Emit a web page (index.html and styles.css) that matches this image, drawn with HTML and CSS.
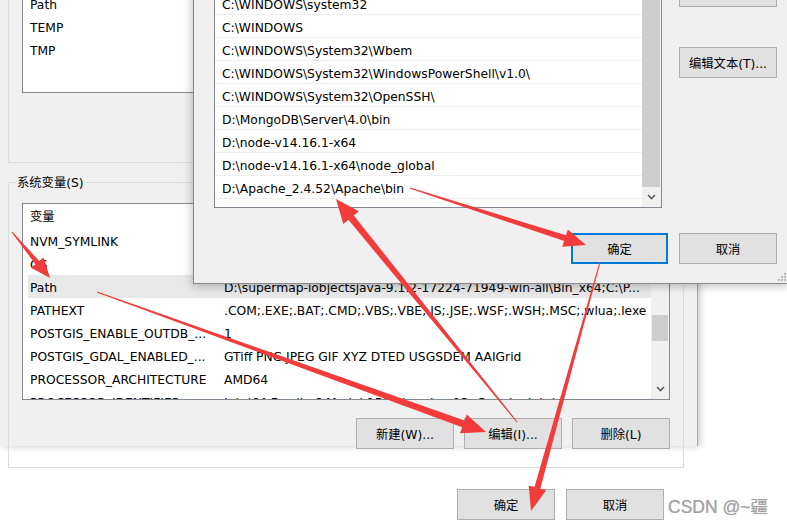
FILE: index.html
```html
<!DOCTYPE html>
<html lang="zh-CN">
<head>
<meta charset="utf-8">
<title>环境变量</title>
<link rel="stylesheet" href="styles.css">
</head>
<body>
<div class="screen">
  <div class="back">
    <div class="group user-group">
      <div class="listbox user-list">
        <div class="rows">
          <div class="lrow"><span class="c1">变量</span><span class="c2">值</span></div>
          <div class="lrow"><span class="c1">OneDrive</span><span class="c2">C:\Users\Administrator\OneDrive</span></div>
          <div class="lrow"><span class="c1">Path</span><span class="c2">C:\Users\Administrator\AppData\Local\Microsoft\WindowsApps;</span></div>
          <div class="lrow"><span class="c1">TEMP</span><span class="c2">C:\Users\Administrator\AppData\Local\Temp</span></div>
          <div class="lrow"><span class="c1">TMP</span><span class="c2">C:\Users\Administrator\AppData\Local\Temp</span></div>
        </div>
      </div>
      <div class="btnrow">
        <button class="btn">新建(N)...</button>
        <button class="btn">编辑(E)...</button>
        <button class="btn">删除(D)</button>
      </div>
    </div>

    <div class="group sys-group">
      <div class="group-title">系统变量(S)</div>
      <div class="listbox sys-list">
        <div class="rows">
          <div class="lrow head"><span class="c1">变量</span><span class="c2">值</span></div>
          <div class="lrow"><span class="c1">NVM_SYMLINK</span><span class="c2">D:\nodejs</span></div>
          <div class="lrow"><span class="c1">OS</span><span class="c2">Windows_NT</span></div>
          <div class="lrow sel"><span class="c1">Path</span><span class="c2">D:\supermap-iobjectsjava-9.1.2-17224-71949-win-all\Bin_x64;C:\P...</span></div>
          <div class="lrow"><span class="c1">PATHEXT</span><span class="c2">.COM;.EXE;.BAT;.CMD;.VBS;.VBE;.JS;.JSE;.WSF;.WSH;.MSC;.wlua;.lexe</span></div>
          <div class="lrow"><span class="c1">POSTGIS_ENABLE_OUTDB_...</span><span class="c2">1</span></div>
          <div class="lrow"><span class="c1">POSTGIS_GDAL_ENABLED_...</span><span class="c2">GTiff PNG JPEG GIF XYZ DTED USGSDEM AAIGrid</span></div>
          <div class="lrow"><span class="c1">PROCESSOR_ARCHITECTURE</span><span class="c2">AMD64</span></div>
          <div class="lrow"><span class="c1">PROCESSOR_IDENTIFIER</span><span class="c2">Intel64 Family 6 Model 158 Stepping 13, GenuineIntel</span></div>
        </div>
        <div class="vscroll back-scroll">
          <div class="thumb"></div>
          <div class="fill"></div>
          <div class="sarrow"><svg width="9" height="6" viewBox="0 0 9 6"><path d="M1 1 L4.5 4.5 L8 1" fill="none" stroke="#606060" stroke-width="1.6"/></svg></div>
        </div>
      </div>
      <div class="btnrow">
        <button class="btn">新建(W)...</button>
        <button class="btn">编辑(I)...</button>
        <button class="btn">删除(L)</button>
      </div>
    </div>

    <div class="footer">
      <button class="btn">确定</button>
      <button class="btn">取消</button>
    </div>
  </div>

  <div class="front">
    <div class="front-main">
      <div class="listbox front-list">
        <div class="frows">
          <div class="frow">C:\Program Files (x86)\Common Files\Oracle\Java\javapath</div>
          <div class="frow">%NVM_SYMLINK%</div>
          <div class="frow">C:\WINDOWS\system32</div>
          <div class="frow">C:\WINDOWS</div>
          <div class="frow">C:\WINDOWS\System32\Wbem</div>
          <div class="frow">C:\WINDOWS\System32\WindowsPowerShell\v1.0\</div>
          <div class="frow">C:\WINDOWS\System32\OpenSSH\</div>
          <div class="frow">D:\MongoDB\Server\4.0\bin</div>
          <div class="frow">D:\node-v14.16.1-x64</div>
          <div class="frow">D:\node-v14.16.1-x64\node_global</div>
          <div class="frow">D:\Apache_2.4.52\Apache\bin</div>
        </div>
        <div class="vscroll front-scroll">
          <div class="thumb"></div>
          <div class="sarrow"><svg width="9" height="6" viewBox="0 0 9 6"><path d="M1 1 L4.5 4.5 L8 1" fill="none" stroke="#606060" stroke-width="1.6"/></svg></div>
        </div>
      </div>
      <div class="side">
        <button class="btn side-first">下移(O)</button>
        <button class="btn side-text">编辑文本(T)...</button>
      </div>
    </div>
    <div class="front-footer">
      <button class="btn btn-default">确定</button>
      <button class="btn">取消</button>
    </div>
    <svg class="grip" width="8" height="8" viewBox="0 0 8 8">
      <rect x="6" y="0" width="2" height="2" fill="#b8b8b8"/>
      <rect x="3" y="3" width="2" height="2" fill="#b8b8b8"/>
      <rect x="6" y="3" width="2" height="2" fill="#b8b8b8"/>
      <rect x="0" y="6" width="2" height="2" fill="#b8b8b8"/>
      <rect x="3" y="6" width="2" height="2" fill="#b8b8b8"/>
      <rect x="6" y="6" width="2" height="2" fill="#b8b8b8"/>
    </svg>
  </div>

  <svg class="arrows" width="787" height="526" viewBox="0 0 787 526">
    <polygon points="11.6,232.3 35.4,264.2 31.1,267.7 50,278 43.5,257.5 39.2,261.0 12.4,231.7"/>
    <polygon points="96.8,292.5 462.2,427.2 460.0,433.3 486,432 466.8,414.5 464.6,420.6 97.2,291.5"/>
    <polygon points="517.4,421.7 353.8,215.4 358.9,211.3 336,199 343.3,223.9 348.4,219.8 516.6,422.3"/>
    <polygon points="409.8,188.5 564.2,241.1 562.3,246.8 586,245 567.9,229.6 566.0,235.3 410.2,187.5"/>
    <polygon points="599.5,261.9 534.5,487.1 528.7,485.5 531,511 546.1,490.3 540.3,488.7 600.5,262.1"/>
  </svg>

  <div class="watermark">CSDN @~疆</div>
</div>
</body>
</html>
```

FILE: styles.css
```css
* {
  box-sizing: border-box;
}

html,
body {
  margin: 0;
  padding: 0;
}

body {
  background: #ffffff;
  color: #000000;
  font-family: "DejaVu Sans", "Noto Sans CJK SC", sans-serif;
  font-size: 12.3px;
}

.screen {
  position: relative;
  width: 787px;
  height: 526px;
  overflow: hidden;
  background: #ffffff;
}

/* ---------- back dialog ---------- */
.back {
  width: 698px;
  height: 526px;
  background: #f0f0f0;
  border-right: 1px solid #a9a9a9;
  box-shadow: 2px 0 7px rgba(0, 0, 0, 0.22);
  padding-left: 8px;
}

.group {
  width: 676px;
  border: 1px solid #dcdcdc;
}

.user-group {
  margin-top: -80px;
  height: 243px;
  padding-top: 24px;
}

.sys-group {
  margin-top: 19px;
  height: 286px;
}

.group-title {
  width: max-content;
  margin: -10px 0 0 7px;
  padding: 2px 1px 0 1px;
  line-height: 17px;
  background: #f0f0f0;
}

.listbox {
  display: flex;
  margin-left: 13px;
  width: 648px;
  border: 1px solid #828790;
  background: #ffffff;
  overflow: hidden;
}

.user-list {
  height: 148px;
}

.sys-list {
  margin-top: 11px;
  height: 197px;
}

.rows {
  flex: 1;
  min-width: 0;
}

.lrow {
  display: flex;
  height: 23px;
  padding-top: 2px;
  line-height: 23px;
  margin-left: 5px;
  white-space: nowrap;
  overflow: hidden;
}

.lrow.head {
  height: 25px;
}

.lrow.sel {
  background: #e8e8e8;
}

.c1 {
  flex: none;
  width: 196px;
  padding-left: 2px;
  overflow: hidden;
}

.c2 {
  flex: 1;
  overflow: hidden;
}

.vscroll {
  flex: none;
  display: flex;
  flex-direction: column;
  background: #f0f0f0;
}

.back-scroll {
  width: 18px;
}

.back-scroll .thumb {
  margin: 111px 1px 0 1px;
  height: 26px;
  background: #cdcdcd;
}

.fill {
  flex: 1;
}

.sarrow {
  height: 20px;
  display: flex;
  align-items: center;
  justify-content: center;
}

.btnrow {
  display: flex;
  justify-content: flex-end;
  gap: 10px;
  margin-top: 18px;
  padding-right: 13px;
}

.btn {
  flex: none;
  width: 98px;
  height: 31px;
  padding: 0;
  margin: 0;
  background: #e1e1e1;
  border: 1px solid #adadad;
  color: #000000;
  font: inherit;
  display: flex;
  align-items: center;
  justify-content: center;
}

.footer {
  display: flex;
  justify-content: flex-end;
  gap: 11px;
  width: 676px;
  margin-top: 21px;
  padding-right: 20px;
}

/* ---------- front dialog (window over the desktop) ---------- */
.front {
  position: absolute;
  left: 193px;
  top: -70px;
  width: 596px;
  background: #f0f0f0;
  border: 1px solid #8a8a8a;
  box-shadow: 0 1px 10px rgba(0, 0, 0, 0.3);
  padding: 14px 11px 19px 20px;
}

.front-main {
  display: flex;
  gap: 17px;
}

.front-list {
  margin-left: 0;
  width: 448px;
  height: 263px;
}

.frows {
  flex: 1;
  min-width: 0;
}

.frow {
  height: 23px;
  padding-top: 2px;
  line-height: 22px;
  padding-left: 7px;
  border-bottom: 1px solid #efefef;
  white-space: nowrap;
  overflow: hidden;
}

.front-scroll {
  width: 19px;
}

.front-scroll .thumb {
  flex: 1;
  margin-right: 1px;
  background: #cdcdcd;
}

.side {
  display: flex;
  flex-direction: column;
  width: 98px;
}

.side-first {
  margin-top: 31px;
}

.side-text {
  margin-top: 40px;
}

.front-footer {
  display: flex;
  justify-content: flex-end;
  gap: 11px;
  margin-top: 25px;
}

.btn-default {
  width: 97px;
  border: 2px solid #0078d7;
}

.grip {
  position: absolute;
  right: 2px;
  bottom: 2px;
}

/* ---------- annotations ---------- */
.arrows {
  position: absolute;
  left: 0;
  top: 0;
  pointer-events: none;
}

.arrows polygon {
  fill: #f23b3b;
}

.watermark {
  position: absolute;
  left: 668px;
  top: 497px;
  font-family: "Liberation Sans", "Noto Sans CJK SC", sans-serif;
  font-size: 17.5px;
  line-height: 20px;
  color: #a2a2a2;
  text-shadow: 0 0 1px rgba(0, 0, 0, 0.25);
  white-space: nowrap;
}
```
